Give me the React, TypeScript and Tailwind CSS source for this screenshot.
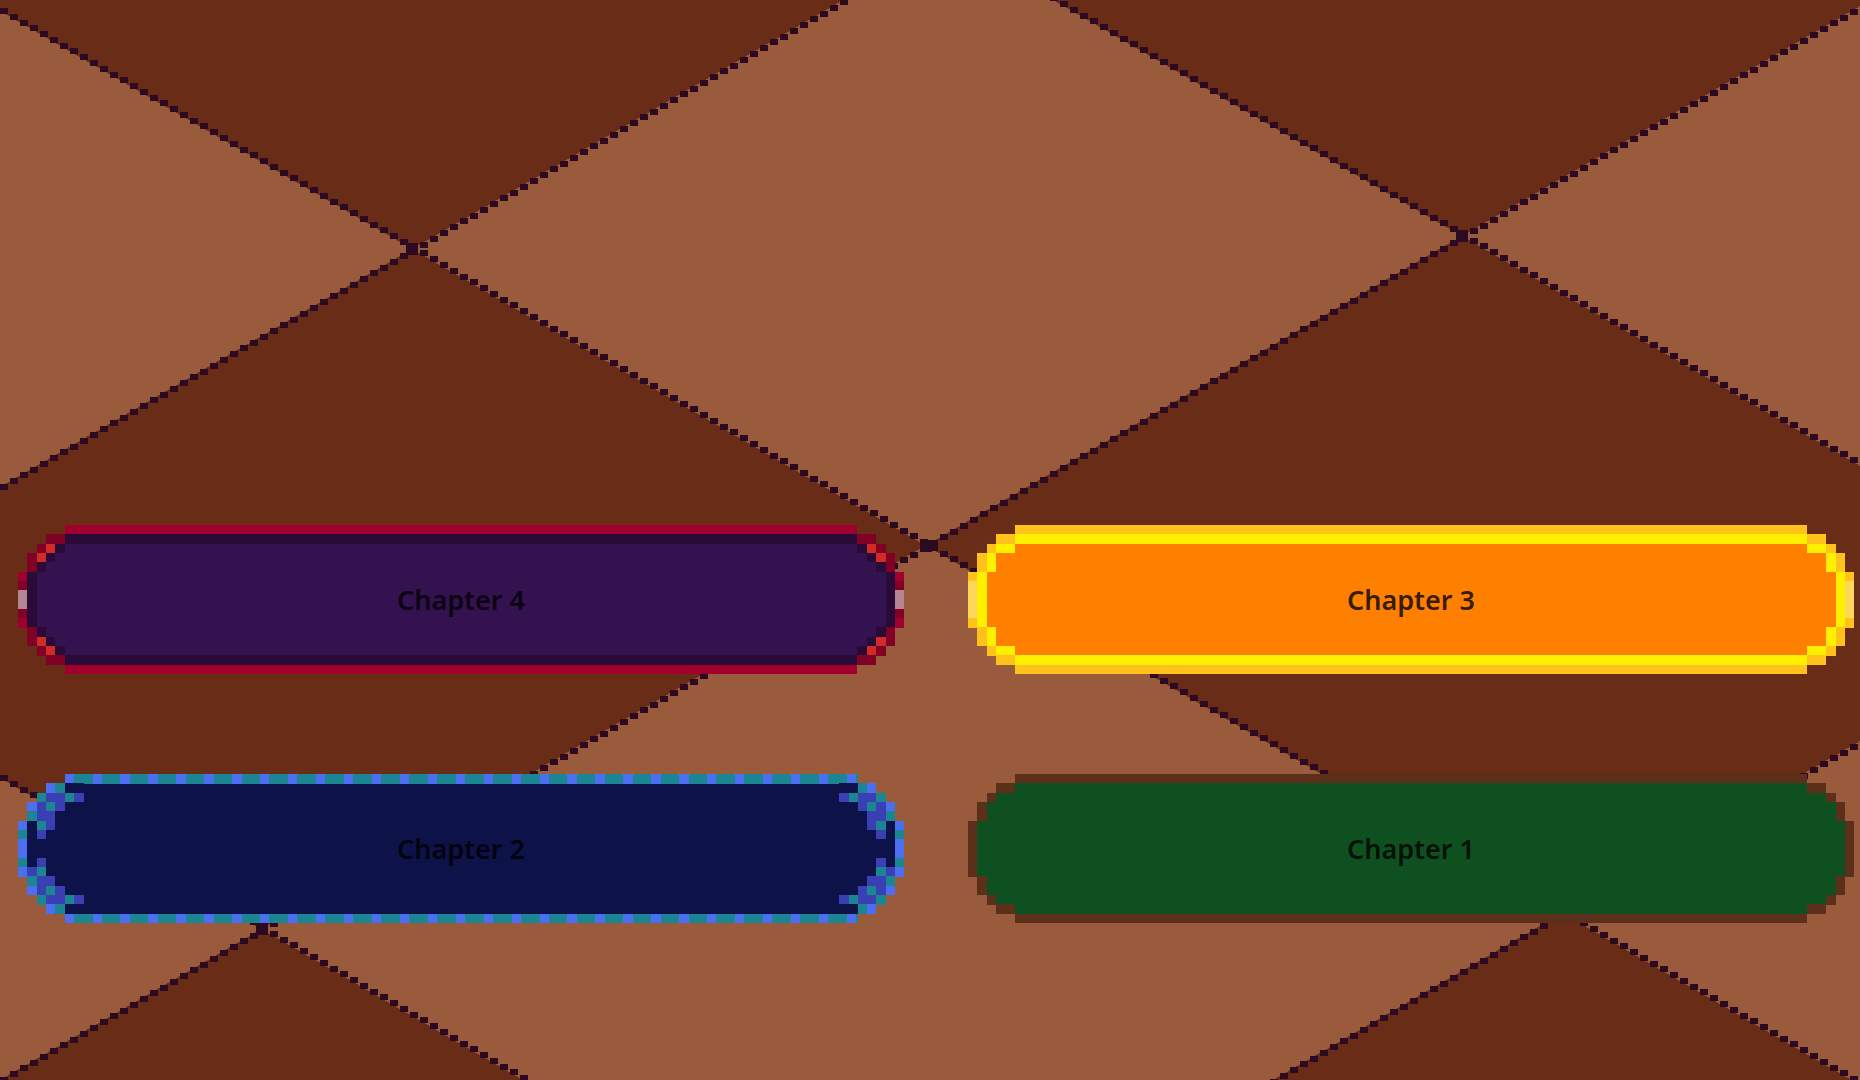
import React from 'react';

// --- Backdrop: harlequin diamonds with pixel stair lines ---

const K = Math.tan(Math.PI / 6);
const A_LINES = [-608, 11, 778]; // y = a + Kx
const B_LINES = [487, 1080, 1815]; // y = b - Kx

const meet = (a: number, b: number): [number, number] => [(b - a) / (2 * K), (a + b) / 2];

const Backdrop: React.FC = () => {
  const as = [-6000, ...A_LINES, 6000];
  const bs = [-6000, ...B_LINES, 6000];

  const cells: React.ReactNode[] = [];
  for (let i = 0; i < 4; i++) {
    for (let j = 0; j < 4; j++) {
      if ((i + j) % 2 === 0) continue;
      const pts = [meet(as[i], bs[j]), meet(as[i], bs[j + 1]), meet(as[i + 1], bs[j + 1]), meet(as[i + 1], bs[j])];
      cells.push(<polygon key={`c${i}${j}`} points={pts.map((p) => p.join(',')).join(' ')} fill="#692d17" />);
    }
  }

  const steps: React.ReactNode[] = [];
  for (let x = -10; x < 1870; x += 10) {
    A_LINES.forEach((a, n) => {
      const y = a + K * x;
      if (y > -10 && y < 1090) steps.push(<rect key={`a${n}-${x}`} x={x} y={y - 3} width={8} height={6} fill="#2b0a22" />);
    });
    B_LINES.forEach((b, n) => {
      const y = b - K * x;
      if (y > -10 && y < 1090) steps.push(<rect key={`b${n}-${x}`} x={x} y={y - 3} width={8} height={6} fill="#2b0a22" />);
    });
  }

  const knots: React.ReactNode[] = [];
  A_LINES.forEach((a) =>
    B_LINES.forEach((b) => {
      const [x, y] = meet(a, b);
      if (x > -20 && x < 1880 && y > -20 && y < 1100)
        knots.push(<rect key={`k${a}${b}`} x={x - 6} y={y - 6} width={12} height={12} fill="#2b0a22" />);
    })
  );

  return (
    <svg className="absolute inset-0" width={1860} height={1080} viewBox="0 0 1860 1080" shapeRendering="crispEdges">
      <rect width={1860} height={1080} fill="#9a5b3d" />
      {cells}
      {steps}
      {knots}
    </svg>
  );
};

// --- Pixel buttons ---

interface Look {
  cap: string[];
  mid: string;
  fill: Record<string, string>;
  band?: string;
}

const purple: Look = {
  fill: { R: '#a1002e', r: '#800026', o: '#d12b26', d: '#2a0b38', p: '#34114f', g: '#b48593' },
  cap: [
    '.....',
    '...rr',
    '..rod',
    '.rodp',
    '.rdpp',
    'Rdppp',
    'rdppp',
    'gdppp',
    'gdppp',
    'rdppp',
    'Rdppp',
    '.rdpp',
    '.rodp',
    '..rod',
    '...rr',
    '.....',
  ],
  mid: 'RdppppppppppppdR',
};

const amber: Look = {
  fill: { A: '#ffc21a', Y: '#fff000', O: '#ff8000', L: '#ffd65c' },
  cap: [
    '.....',
    '...AA',
    '..AYY',
    '.AYOO',
    '.AYOO',
    'AYOOO',
    'LYOOO',
    'LYOOO',
    'LYOOO',
    'LYOOO',
    'AYOOO',
    '.AYOO',
    '.AYOO',
    '..AYY',
    '...AA',
    '.....',
  ],
  mid: 'AYOOOOOOOOOOOOYA',
};

const navy: Look = {
  fill: { U: '#4c6ff0', T: '#1b8594', V: '#3a40b4', N: '#0d1249' },
  cap: [
    '.......',
    '...UTNN',
    '..TVVTV',
    '.UVTVNN',
    '.TVVNNN',
    'UNTVNNN',
    'TNVNNNN',
    'UNNNNNN',
    'UNNNNNN',
    'TNVNNNN',
    'UVTNNNN',
    '.TVVNNN',
    '.UVTVNN',
    '..TVVTV',
    '...UTNN',
    '.......',
  ],
  mid: '.NNNNNNNNNNNNNN.',
  band: 'UTT',
};

const forest: Look = {
  fill: { B: '#5c2f1b', G: '#0f5020' },
  cap: [
    '.....',
    '...BB',
    '..BGG',
    '.BGGG',
    '.BGGG',
    'BGGGG',
    'BGGGG',
    'BGGGG',
    'BGGGG',
    'BGGGG',
    'BGGGG',
    '.BGGG',
    '.BGGG',
    '..BGG',
    '...BB',
    '.....',
  ],
  mid: 'BGGGGGGGGGGGGGGB',
};

const W = 886;
const H = 149;
const C = H / 16;

const PixelFrame: React.FC<{ look: Look }> = ({ look }) => {
  const rects: React.ReactNode[] = [];
  const { fill, cap, mid, band } = look;

  mid.split('').forEach((ch, r) => {
    if (ch === '.') return;
    rects.push(<rect key={`m${r}`} x={5 * C} y={r * C} width={W - 10 * C} height={C + 0.4} fill={fill[ch]} />);
  });

  if (band) {
    [0, 15].forEach((r) => {
      for (let n = 0; 5 * C + n * C < W - 5 * C; n++) {
        const x = 5 * C + n * C;
        const w = Math.min(C, W - 5 * C - x);
        rects.push(<rect key={`b${r}-${n}`} x={x} y={r * C} width={w + 0.4} height={C + 0.4} fill={fill[band[n % band.length]]} />);
      }
    });
  }

  cap.forEach((row, r) => {
    row.split('').forEach((ch, k) => {
      if (ch === '.') return;
      rects.push(<rect key={`l${r}-${k}`} x={k * C} y={r * C} width={C + 0.4} height={C + 0.4} fill={fill[ch]} />);
      rects.push(<rect key={`r${r}-${k}`} x={W - (k + 1) * C} y={r * C} width={C + 0.4} height={C + 0.4} fill={fill[ch]} />);
    });
  });

  return (
    <svg className="absolute inset-0" width={W} height={H} viewBox={`0 0 ${W} ${H}`} shapeRendering="crispEdges">
      {rects}
    </svg>
  );
};

const ChapterButton: React.FC<{ label: string; look: Look }> = ({ label, look }) => (
  <button className="relative w-[886px] h-[149px] flex items-center justify-center">
    <PixelFrame look={look} />
    <span className="relative font-['Noto_Sans',sans-serif] text-[27px] font-semibold text-black/80 leading-none">
      {label}
    </span>
  </button>
);

export default function App() {
  return (
    <div className="relative w-[1860px] h-[1080px] overflow-hidden bg-[#9a5b3d]">
      <Backdrop />
      <div className="relative grid grid-cols-[886px_886px] gap-x-16 gap-y-[100px] pl-[18px] pt-[525px]">
        <ChapterButton label="Chapter 4" look={purple} />
        <ChapterButton label="Chapter 3" look={amber} />
        <ChapterButton label="Chapter 2" look={navy} />
        <ChapterButton label="Chapter 1" look={forest} />
      </div>
    </div>
  );
}
